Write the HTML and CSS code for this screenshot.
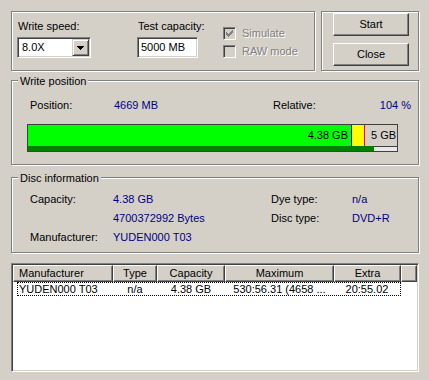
FILE: index.html
```html
<!DOCTYPE html>
<html lang="en">
<head>
    <meta charset="UTF-8">
    <title>Write Test</title>
    <link rel="stylesheet" href="styles.css">
</head>
<body>
    <div class="window">
        <div class="top">
            <div class="group settings">
                <div class="field speed">
                    <label class="lbl">Write speed:</label>
                    <div class="combo">
                        <span class="combo-text">8.0X</span>
                        <span class="drop">
                            <svg width="7" height="4" viewBox="0 0 7 4" shape-rendering="crispEdges"><path d="M0 0h7v1h-1v1h-1v1h-1v1h-1v-1h-1v-1h-1v-1h-1z" fill="#000"/></svg>
                        </span>
                    </div>
                </div>
                <div class="field capacity">
                    <label class="lbl">Test capacity:</label>
                    <div class="edit">5000 MB</div>
                </div>
                <div class="checks">
                    <div class="check">
                        <span class="box">
                            <svg width="7" height="7" viewBox="0 0 7 7" shape-rendering="crispEdges" fill="#808080">
                                <rect x="6" y="0" width="1" height="1"/>
                                <rect x="5" y="1" width="2" height="1"/>
                                <rect x="0" y="2" width="1" height="1"/>
                                <rect x="4" y="2" width="3" height="1"/>
                                <rect x="0" y="3" width="2" height="1"/>
                                <rect x="3" y="3" width="3" height="1"/>
                                <rect x="0" y="4" width="5" height="1"/>
                                <rect x="1" y="5" width="3" height="1"/>
                                <rect x="2" y="6" width="1" height="1"/>
                            </svg>
                        </span>
                        <span class="ctext">Simulate</span>
                    </div>
                    <div class="check">
                        <span class="box"></span>
                        <span class="ctext">RAW mode</span>
                    </div>
                </div>
            </div>
            <div class="group actions">
                <button class="btn">Start</button>
                <button class="btn">Close</button>
            </div>
        </div>

        <div class="group position">
            <span class="legend">Write position</span>
            <div class="pos-row">
                <span>Position:</span>
                <span class="val">4669 MB</span>
                <span>Relative:</span>
                <span class="val">104 %</span>
            </div>
            <div class="bar">
                <div class="bar-main">
                    <div class="fill">4.38 GB</div>
                    <div class="over"></div>
                    <div class="rest">5 GB</div>
                </div>
                <div class="bar-strip">
                    <div class="strip-done"></div>
                    <div class="strip-left"></div>
                </div>
            </div>
        </div>

        <div class="group disc">
            <span class="legend">Disc information</span>
            <div class="disc-grid">
                <span>Capacity:</span>
                <span class="val">4.38 GB</span>
                <span>Dye type:</span>
                <span class="val">n/a</span>
                <span></span>
                <span class="val">4700372992 Bytes</span>
                <span>Disc type:</span>
                <span class="val">DVD+R</span>
                <span>Manufacturer:</span>
                <span class="val">YUDEN000 T03</span>
            </div>
        </div>

        <div class="list">
            <div class="list-head">
                <div class="hcell first">Manufacturer</div>
                <div class="hcell">Type</div>
                <div class="hcell">Capacity</div>
                <div class="hcell">Maximum</div>
                <div class="hcell">Extra</div>
                <div class="hcell"></div>
            </div>
            <div class="list-row">
                <span class="first">YUDEN000 T03</span>
                <span>n/a</span>
                <span>4.38 GB</span>
                <span>530:56.31 (4658 ...</span>
                <span>20:55.02</span>
            </div>
        </div>
    </div>
</body>
</html>
```

FILE: styles.css
```css
body {
    margin: 0;
    background: #d4d0c8;
    font: 11px/13px "Liberation Sans", Arial, sans-serif;
    color: #000;
}
.window {
    padding: 11px;
    width: 408px;
}
.top {
    display: flex;
    gap: 6px;
}
.group {
    position: relative;
    box-sizing: border-box;
    border: 1px solid #808080;
    box-shadow: inset 1px 1px #fff, 1px 1px #fff;
}
.legend {
    position: absolute;
    top: -6px;
    left: 6px;
    padding: 0 2px;
    background: #d4d0c8;
}
.val {
    color: #000080;
}

/* settings box */
.settings {
    width: 304px;
    height: 60px;
    display: flex;
    padding: 8px 0 0 5px;
}
.lbl {
    display: block;
    padding-left: 1px;
    margin-bottom: 4px;
    white-space: nowrap;
}
.speed {
    width: 74px;
}
.capacity {
    width: 61px;
    margin-left: 46px;
}
.combo, .edit {
    box-sizing: border-box;
    height: 21px;
    background: #fff;
    border: 1px solid;
    border-color: #808080 #fff #fff #808080;
    box-shadow: inset 1px 1px #404040, inset -1px -1px #d4d0c8;
}
.combo {
    display: flex;
    align-items: center;
    padding: 1px;
}
.combo-text {
    padding-left: 3px;
}
.drop {
    margin-left: auto;
    box-sizing: border-box;
    width: 17px;
    height: 17px;
    display: flex;
    align-items: center;
    justify-content: center;
    background: #d4d0c8;
    border: 1px solid;
    border-color: #d4d0c8 #404040 #404040 #d4d0c8;
    box-shadow: inset 1px 1px #fff, inset -1px -1px #808080;
}
.edit {
    padding: 3px 0 0 3px;
}
.checks {
    margin-left: 25px;
    padding-top: 7px;
    display: flex;
    flex-direction: column;
    gap: 5px;
}
.check {
    display: flex;
    align-items: center;
    height: 13px;
}
.box {
    box-sizing: border-box;
    width: 13px;
    height: 13px;
    display: flex;
    align-items: center;
    justify-content: center;
    background: #d4d0c8;
    border: 1px solid;
    border-color: #808080 #fff #fff #808080;
    box-shadow: inset 1px 1px #404040, inset -1px -1px #d4d0c8;
}
.ctext {
    margin-left: 6px;
    color: #808080;
    text-shadow: 1px 1px #fff;
}

/* buttons */
.actions {
    width: 98px;
    height: 60px;
    display: flex;
    flex-direction: column;
    gap: 7px;
    padding: 1px 0 0 11px;
}
.btn {
    box-sizing: border-box;
    width: 76px;
    height: 23px;
    padding: 0;
    font: inherit;
    color: #000;
    background: #d4d0c8;
    border: 1px solid;
    border-color: #fff #404040 #404040 #fff;
    box-shadow: inset -1px -1px #808080;
}

/* write position */
.position {
    margin-top: 9px;
    height: 85px;
    padding: 18px 7px 0 18px;
}
.pos-row {
    display: grid;
    grid-template-columns: 84px 159px 1fr auto;
}
.bar {
    box-sizing: border-box;
    margin: 12px 0 0 -3px;
    width: 371px;
    height: 28px;
    border: 1px solid #404040;
    display: flex;
    flex-direction: column;
}
.bar-main {
    height: 21px;
    display: flex;
    line-height: 21px;
}
.fill {
    width: 323px;
    background: #00ff00;
    text-align: right;
    padding-right: 3px;
    box-sizing: border-box;
}
.over {
    box-sizing: border-box;
    width: 14px;
    background: #ffff00;
    border-left: 1px solid #0000ff;
    border-right: 1px solid #ff0000;
}
.rest {
    flex: 1;
    padding-left: 6px;
    background: #d4d0c8;
}
.bar-strip {
    flex: 1;
    display: flex;
}
.strip-done {
    width: 346px;
    background: #008000;
}
.strip-left {
    flex: 1;
    background: #e8e8e8;
    border-top: 1px solid #404040;
}

/* disc information */
.disc {
    margin-top: 12px;
    height: 76px;
    padding: 15px 0 0 18px;
}
.disc-grid {
    display: grid;
    grid-template-columns: 83px 158px 81px auto;
    grid-auto-rows: 19px;
}

/* list view */
.list {
    box-sizing: border-box;
    margin-top: 10px;
    height: 109px;
    background: #fff;
    border: 1px solid;
    border-color: #808080 #fff #fff #808080;
    box-shadow: inset 1px 1px #404040, inset -1px -1px #d4d0c8;
    padding: 1px;
}
.list-head {
    display: grid;
    grid-template-columns: 100px 44px 68px 109px 67px 1fr;
    height: 17px;
}
.hcell {
    box-sizing: border-box;
    background: #d4d0c8;
    border: 1px solid;
    border-color: #fff #404040 #404040 #fff;
    box-shadow: inset -1px -1px #808080;
    text-align: center;
    padding-top: 1px;
}
.hcell.first {
    text-align: left;
    padding-left: 5px;
}
.list-row {
    box-sizing: border-box;
    margin-left: 4px;
    width: 384px;
    height: 14px;
    border: 1px dotted #000;
    display: grid;
    grid-template-columns: 95px 44px 68px 109px 66px;
    line-height: 12px;
    text-align: center;
}
.list-row .first {
    text-align: left;
    padding-left: 1px;
}
```
